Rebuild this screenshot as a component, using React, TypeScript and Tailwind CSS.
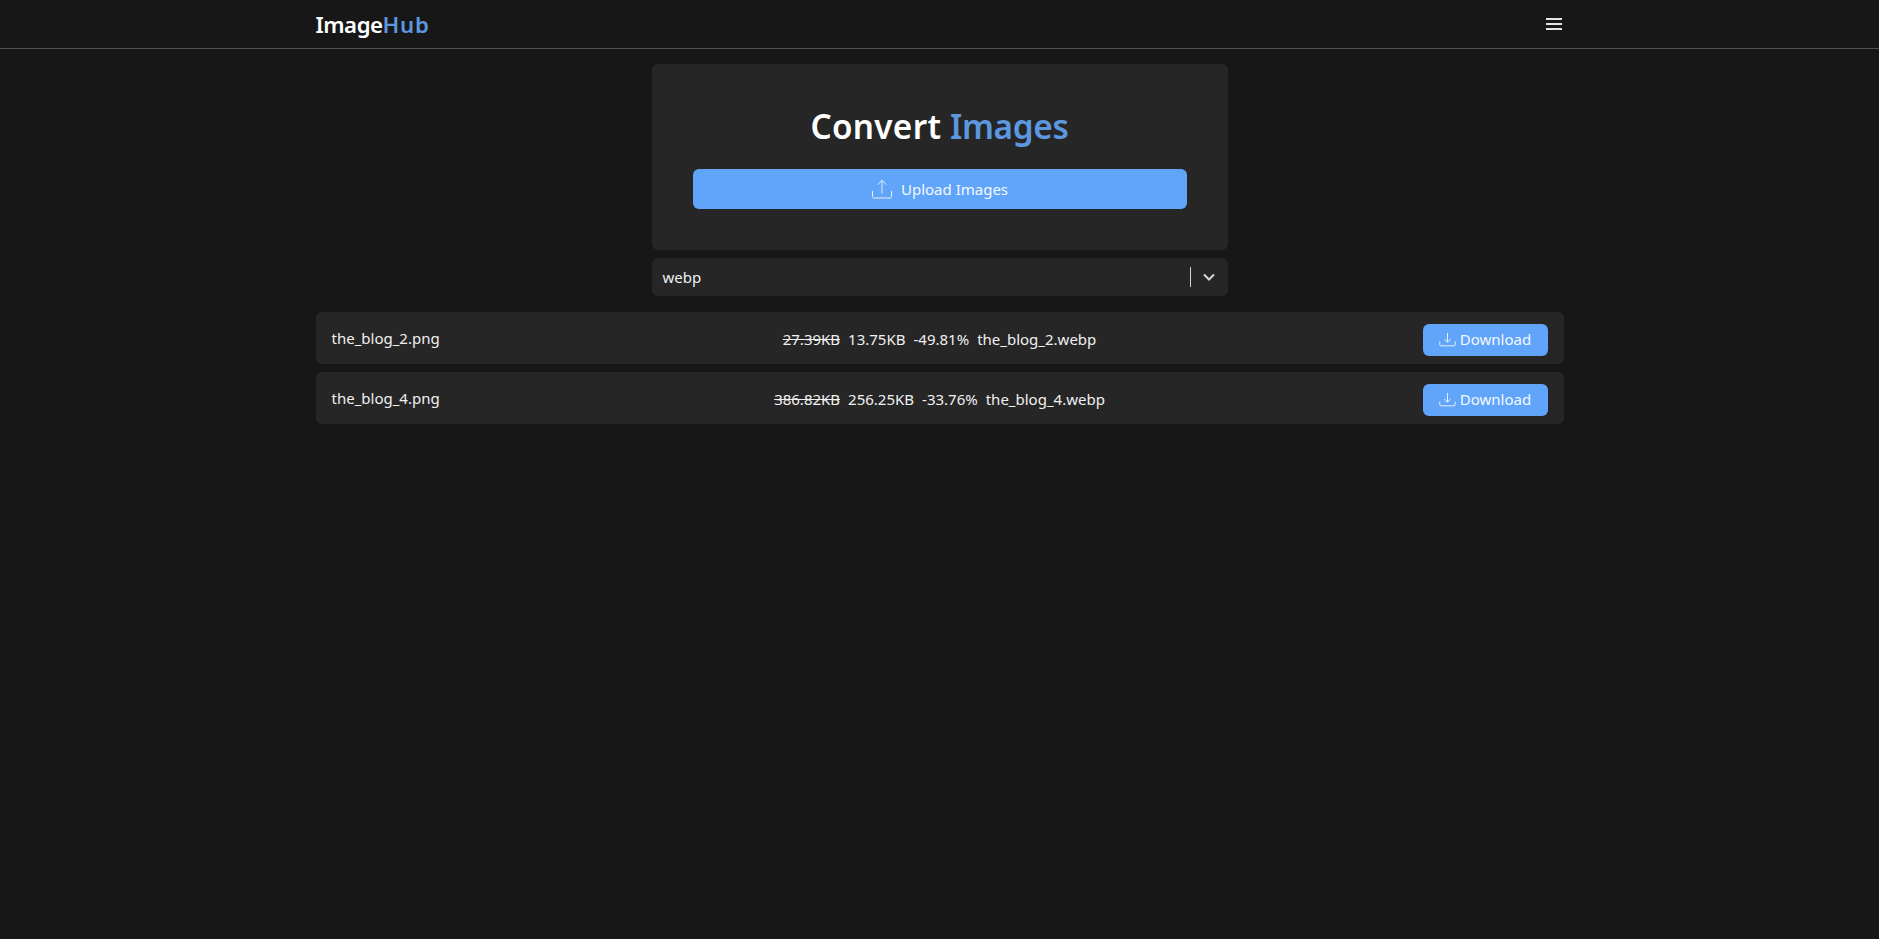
const font = "[font-family:'Noto_Sans',sans-serif]";

function UploadIcon() {
  return (
    <svg width="22" height="20" viewBox="0 0 22 20" fill="none" stroke="currentColor" strokeWidth="1" className="opacity-90">
      <path d="M11 14.5V1.5M6.8 5.7 11 1.2l4.2 4.5" />
      <path d="M1.5 12v5.7c0 .9.5 1.3 1.3 1.3h16.4c.8 0 1.3-.4 1.3-1.3V12" />
    </svg>
  );
}

function DownloadIcon() {
  return (
    <svg width="17" height="15" viewBox="0 0 17 15" fill="none" stroke="currentColor" strokeWidth="1" className="opacity-90">
      <path d="M8.5 1v9M5.2 7l3.3 3.2L11.8 7" />
      <path d="M.8 9.5v3.2c0 .8.4 1.1 1.1 1.1h13.200c.7 0 1.100-.3 1.100-1.100V9.500" />
    </svg>
  );
}

function Row({ name, before, after, pct, out }: { name: string; before: string; after: string; pct: string; out: string }) {
  return (
    <div className="flex h-[52px] items-center justify-between rounded-md bg-[#262626] px-4 text-[15px] text-[#f0f0f0]">
      <span className="w-[200px]">{name}</span>
      <div className="flex items-center gap-2 pt-[3px]">
        <span className="line-through">{before}</span>
        <span>{after}</span>
        <span>{pct}</span>
        <span>{out}</span>
      </div>
      <div className="flex w-[200px] justify-end pt-[3px]">
        <button className="flex h-8 w-[125px] items-center justify-center gap-[4px] rounded-md bg-[#60a5fa] text-[#f4f8ff]">
          <DownloadIcon />
          Download
        </button>
      </div>
    </div>
  );
}

export default function App() {
  return (
    <div className={`${font} min-h-[939px] bg-[#171717] text-white`}>
      <header className="h-[49px] border-b border-[#525252]">
        <div className="mx-auto flex h-12 w-[1248px] items-center justify-between">
          <div className="pt-[2px] text-[22.2px] font-semibold">
            <span className="tracking-[-0.45px]">Image</span>
            <span className="tracking-[0.7px] text-[#5c97e0]">Hub</span>
          </div>
          <svg width="18" height="14" viewBox="0 0 18 14" className="mr-[1px] text-[#e5e5e5]" fill="none" stroke="currentColor" strokeWidth="2">
            <path d="M1 2h16M1 7h16M1 12h16" />
          </svg>
        </div>
      </header>
      <main className="mx-auto w-[1248px] pt-[15px]">
        <div className="mx-auto w-[576px]">
          <section className="flex h-[186px] flex-col items-center rounded-md bg-[#262626] px-[41px] pt-[38px]">
            <h1 className="text-[33.3px] leading-[48px] font-semibold">
              <span className="tracking-[0.3px]">Convert</span> <span className="tracking-[-0.3px] text-[#5c97e0]">Images</span>
            </h1>
            <button className="mt-[19px] flex h-10 w-full items-center justify-center gap-2 rounded-md bg-[#60a5fa] text-[15px] text-[#f4f8ff]">
              <UploadIcon />
              <span className="pt-[1px]">Upload Images</span>
            </button>
          </section>
          <div className="mt-2 flex h-[38px] items-center justify-between rounded-md bg-[#262626] pr-[13px] pl-[11px] text-[15px] text-[#f0f0f0]">
            <span className="pt-[1px]">webp</span>
            <div className="flex items-center gap-[12px]">
              <div className="h-5 w-px bg-[#d4d4d4]" />
              <svg width="12" height="8" viewBox="0 0 12 8" fill="none" stroke="#d4d4d4" strokeWidth="2">
                <path d="m1 1.5 5 5 5-5" />
              </svg>
            </div>
          </div>
        </div>
        <div className="mt-4 flex flex-col gap-2">
          <Row name="the_blog_2.png" before="27.39KB" after="13.75KB" pct="-49.81%" out="the_blog_2.webp" />
          <Row name="the_blog_4.png" before="386.82KB" after="256.25KB" pct="-33.76%" out="the_blog_4.webp" />
        </div>
      </main>
    </div>
  );
}
